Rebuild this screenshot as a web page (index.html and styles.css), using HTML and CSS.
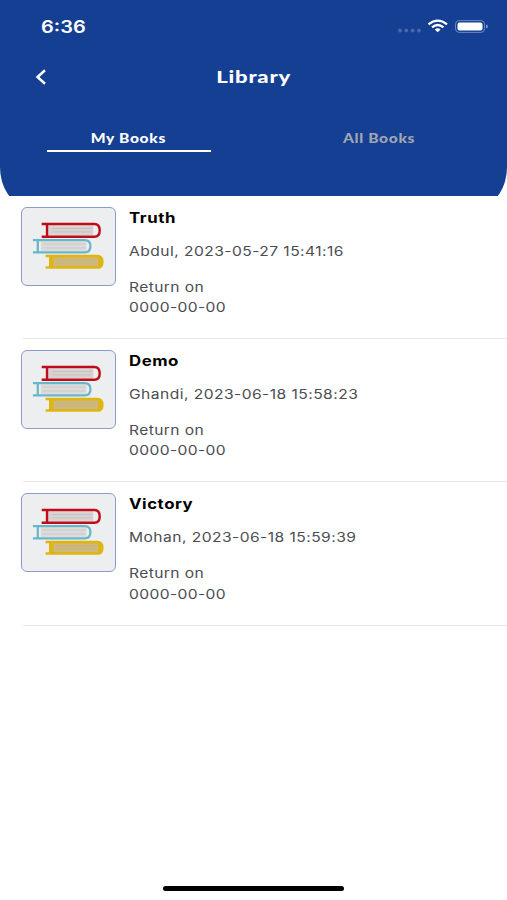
FILE: index.html
```html
<!DOCTYPE html>
<html lang="en">
<head>
<meta charset="utf-8">
<title>Library</title>
<link rel="stylesheet" href="styles.css">
</head>
<body>
<svg width="0" height="0" class="defs" aria-hidden="true">
  <symbol id="books" viewBox="0 0 95 79">
    <path d="M27 18H73V28H27Z" fill="#d8d3d1"/>
    <path d="M20 16.500H74Q79.500 16.500 79.500 23T74 29.500H20M25.500 16.500V29.500" fill="none" stroke="#bd0d18" stroke-width="2.500"/>
    <path d="M31 21H71M31 24.500H71" stroke="#c5c0bf" stroke-width="1"/>
    <path d="M19 34H66V44H19Z" fill="#dcdbda"/>
    <path d="M11 33H64Q70 33 70 39.300T64 45.600H11M16 33V45.600" fill="none" stroke="#67b7c9" stroke-width="2.300"/>
    <path d="M21 37H65M21 41H65" stroke="#c7c8c8" stroke-width="1"/>
    <path d="M24 48H77Q83.500 48 83.500 55.300T77 62.300H24V59.800H27.500V50.500H24Z" fill="#dfb512"/>
    <path d="M32 50.800H78V59.800H32Z" fill="#cfb878"/>
    <path d="M35 53.500H76M35 56.500H76" stroke="#c6b486" stroke-width="1"/>
  </symbol>
</svg>
<header class="header">
  <div class="panel">
    <div class="status">
      <span class="time"><span class="text">6:36</span></span>
      <svg class="signals" width="92" height="18" viewBox="0 0 92 18">
        <g fill="#4468ab"><circle cx="3" cy="12.500" r="2"/><circle cx="9.300" cy="12.500" r="2"/><circle cx="15.600" cy="12.500" r="2"/><circle cx="21.900" cy="12.500" r="2"/></g>
        <g fill="none" stroke="#fff" stroke-width="2.300"><path d="M31.500 6.300Q40.700-1 50 6.300"/><path d="M35 9.300Q40.700 4.800 46.500 9.300"/></g>
        <path d="M37.800 11.400Q40.700 9.300 43.600 11.400L40.700 14.200Z" fill="#fff"/>
        <rect x="58.500" y="2.600" width="29" height="11.800" rx="3.600" fill="none" stroke="#6d89bf"/>
        <rect x="60.500" y="4.500" width="25" height="8" rx="2" fill="#fff"/>
        <path d="M89 6.500Q91 7 91 8.500T89 10.500Z" fill="#7c96c6"/>
      </svg>
    </div>
    <div class="navbar">
      <svg class="back" width="14" height="18" viewBox="0 0 14 18"><path d="M11 2.300L3.500 9L11 15.700" fill="none" stroke="#fff" stroke-width="2.500"/></svg>
      <h1 class="title"><span class="text">Library</span></h1>
    </div>
    <nav class="tabs">
      <div class="tab active"><span class="text">My Books</span></div>
      <div class="tab"><span class="text">All Books</span></div>
    </nav>
  </div>
</header>
<main class="list">
  <article class="item">
    <svg class="cover"><use href="#books"/></svg>
    <div class="info">
      <h2 class="name"><span class="text">Truth</span></h2>
      <p class="meta"><span class="text">Abdul, 2023-05-27 15:41:16</span></p>
      <p class="due"><span class="text">Return on<br>0000-00-00</span></p>
    </div>
  </article>
  <article class="item">
    <svg class="cover"><use href="#books"/></svg>
    <div class="info">
      <h2 class="name"><span class="text">Demo</span></h2>
      <p class="meta"><span class="text">Ghandi, 2023-06-18 15:58:23</span></p>
      <p class="due"><span class="text">Return on<br>0000-00-00</span></p>
    </div>
  </article>
  <article class="item">
    <svg class="cover"><use href="#books"/></svg>
    <div class="info">
      <h2 class="name"><span class="text">Victory</span></h2>
      <p class="meta"><span class="text">Mohan, 2023-06-18 15:59:39</span></p>
      <p class="due"><span class="text">Return on<br>0000-00-00</span></p>
    </div>
  </article>
</main>
<footer class="footer"><div class="home"></div></footer>
</body>
</html>
```
FILE: styles.css
```css
* { box-sizing: border-box; }
body {
  margin: 0;
  height: 900px;
  display: flex;
  flex-direction: column;
  background: #fff;
  font-family: Inter, sans-serif;
  overflow: hidden;
}
h1, h2, p { margin: 0; }
.defs { display: none; }
.text {
  display: inline-block;
  white-space: nowrap;
  transform: scaleX(1.2);
  transform-origin: left center;
}
.header { height: 195.500px; flex: none; overflow: hidden; }
.panel {
  height: 205px;
  background: #143f93;
  border-radius: 0 0 26px 26px / 0 0 38px 38px;
}
.status {
  height: 52px;
  padding: 18px 16px 0 41px;
  display: flex;
  justify-content: space-between;
}
.time { color: #fff; font-size: 16.700px; line-height: 18px; font-weight: 600; }
.signals { margin-right: 2px; }
.navbar {
  height: 50px;
  display: grid;
  grid-template-columns: 80px 1fr 80px;
  align-items: center;
}
.back { margin-left: 33.500px; }
.title { text-align: center; color: #fff; font: 900 17.500px/22px Lato, sans-serif; letter-spacing: 0.6px; }
.title .text { transform: scaleX(1.26); }
.title .text, .tab .text { transform-origin: center; }
.tabs { display: flex; justify-content: space-between; padding: 24px 45.500px 0 46.500px; }
.tab {
  width: 164.500px;
  height: 27px;
  text-align: center;
  color: #a0a6b3;
  font: 900 13px/24px Lato, sans-serif;
  letter-spacing: 0.55px;
}
.active { height: 26px; color: #fff; border-bottom: 2px solid #fff; }
.list { flex: 1; }
.item {
  height: 143.400px;
  margin-left: 23px;
  padding-top: 11px;
  display: flex;
  border-bottom: 1px solid #e8e8e8;
}
.cover {
  flex: none;
  width: 95px;
  height: 79px;
  margin-left: -2px;
  background: #eceef0;
  border: 1px solid #8b9dc6;
  border-radius: 6px;
}
.info { margin-left: 13px; }
.name { color: #000; font-size: 14px; line-height: 22px; font-weight: 700; letter-spacing: 0.45px; }
.meta { margin-top: 11px; color: #4b4d52; font-size: 13px; line-height: 22px; letter-spacing: 0.38px; }
.due { margin-top: 15px; color: #4b4d52; font-size: 13px; line-height: 20.500px; letter-spacing: 0.32px; }
.footer { height: 14.500px; display: flex; justify-content: center; }
.home { width: 181px; height: 5.500px; border-radius: 3px; background: #000; }
```
